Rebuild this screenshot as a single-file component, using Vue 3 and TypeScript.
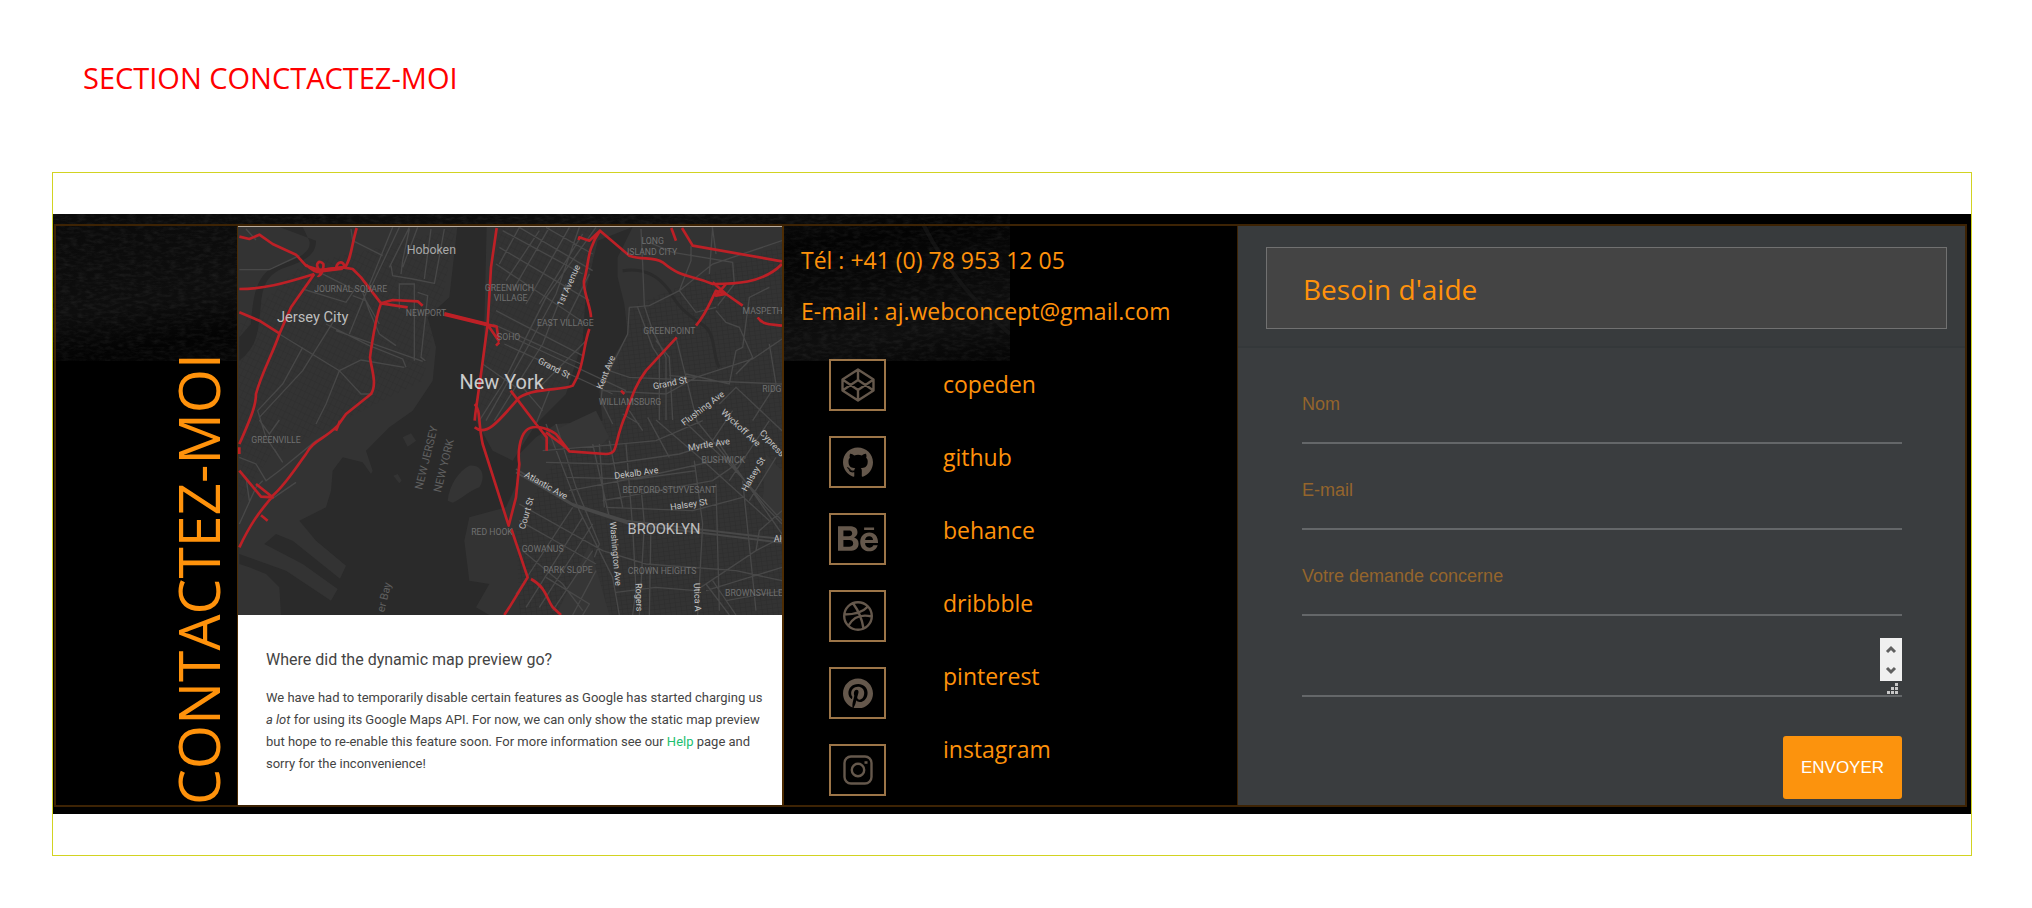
<script setup lang="ts">
import { ref } from 'vue'

interface Network {
  name: string
  viewBox: string
  width: number
  fill?: string
  stroke?: string
}

const networks: Network[] = [
  { name: 'copeden', viewBox: '0 0 34 34', width: 34, stroke: 'M17 1.5 32.5 11.5V22.5L17 32.5 1.5 22.5V11.5ZM17 32.5V22M32.5 11.5 17 22 1.5 11.5M1.5 22.5 17 12 32.5 22.5M17 1.5V12' },
  { name: 'github', viewBox: '0 0 496 512', width: 30, fill: 'M165.9 397.4c0 2-2.3 3.6-5.2 3.6-3.3.3-5.6-1.3-5.6-3.6 0-2 2.3-3.6 5.2-3.6 3-.3 5.6 1.3 5.6 3.6zm-31.1-4.5c-.7 2 1.3 4.3 4.3 4.9 2.6 1 5.6 0 6.2-2s-1.3-4.3-4.3-5.2c-2.6-.7-5.5.3-6.2 2.3zm44.2-1.7c-2.9.7-4.9 2.6-4.6 4.9.3 2 2.9 3.3 5.9 2.6 2.9-.7 4.9-2.6 4.6-4.6-.3-1.9-3-3.2-5.9-2.9zM244.8 8C106.1 8 0 113.3 0 252c0 110.9 69.8 205.8 169.5 239.2 12.8 2.3 17.3-5.6 17.3-12.1 0-6.2-.3-40.4-.3-61.4 0 0-70 15-84.7-29.8 0 0-11.4-29.1-27.8-36.6 0 0-22.9-15.7 1.6-15.4 0 0 24.9 2 38.6 25.8 21.9 38.6 58.6 27.5 72.9 20.9 2.3-16 8.8-27.1 16-33.7-55.9-6.2-112.3-14.3-112.3-110.5 0-27.5 7.6-41.3 23.6-58.9-2.6-6.5-11.1-33.3 2.6-67.9 20.9-6.5 69 27 69 27 20-5.6 41.5-8.5 62.8-8.5s42.8 2.9 62.8 8.5c0 0 48.1-33.6 69-27 13.7 34.7 5.2 61.4 2.6 67.9 16 17.7 25.8 31.5 25.8 58.9 0 96.5-58.9 104.2-114.8 110.5 9.2 7.9 17 22.9 17 46.4 0 33.7-.3 75.4-.3 83.6 0 6.5 4.6 14.4 17.3 12.1C428.2 457.8 496 362.9 496 252 496 113.3 383.5 8 244.8 8zM97.2 352.9c-1.3 1-1 3.3.7 5.2 1.6 1.6 3.9 2.3 5.2 1 1.3-1 1-3.3-.7-5.2-1.6-1.6-3.9-2.3-5.2-1zm-10.8-8.1c-.7 1.3.3 2.9 2.3 3.9 1.6 1 3.6.7 4.3-.7.7-1.3-.3-2.9-2.3-3.9-2-.6-3.6-.3-4.3.7zm32.4 35.6c-1.6 1.3-1 4.3 1.3 6.2 2.3 2.3 5.2 2.6 6.5 1 1.3-1.3.7-4.3-1.3-6.2-2.2-2.3-5.2-2.6-6.5-1zm-11.4-14.7c-1.6 1-1.6 3.6 0 5.9 1.6 2.3 4.3 3.3 5.6 2.3 1.6-1.3 1.6-3.9 0-6.2-1.4-2.3-4-3.3-5.6-2z' },
  { name: 'behance', viewBox: '0 0 576 512', width: 40, fill: 'M232 237.2c31.8-15.2 48.4-38.2 48.4-74 0-70.6-52.6-87.8-113.3-87.8H0v354.4h171.8c64.4 0 124.9-30.9 124.9-102.9 0-44.5-21.1-77.4-64.7-89.7zM77.9 135.9H151c28.1 0 53.4 7.9 53.4 40.5 0 30.1-19.7 42.2-47.5 42.2h-79v-82.7zm83.3 233.7H77.9V272h84.9c34.3 0 56 14.3 56 50.6 0 35.8-25.9 47-57.6 47zm358.5-240.7H376V94h143.7v34.9zM576 305.2c0-75.9-44.4-139.2-124.9-139.2-78.2 0-131.3 58.8-131.3 135.8 0 79.9 50.3 134.7 131.3 134.7 61.3 0 101-27.6 120.1-86.3H509c-6.7 21.9-34.3 33.5-55.7 33.5-41.3 0-63-24.2-63-65.3h185.1c.3-4.2.6-8.7.6-13.2zM390.4 274c2.3-33.7 24.7-54.8 58.5-54.8 35.4 0 53.2 20.8 56.2 54.8H390.4z' },
  { name: 'dribbble', viewBox: '0 0 30 30', width: 30, stroke: 'M15 1.2A13.8 13.8 0 1 0 15 28.8 13.8 13.8 0 1 0 15 1.2M10 2.2C15 9 19 17 20.5 27.5M1.2 13.5C11 13.5 20 11 25 5.5M5.5 24.5C10 16.5 18 13 28.8 15.5' },
  { name: 'pinterest', viewBox: '0 0 496 512', width: 30, fill: 'M496 256c0 137-111 248-248 248-25.6 0-50.2-3.9-73.4-11.1 10.1-16.5 25.2-43.5 30.8-65 3-11.6 15.4-59 15.4-59 8.1 15.4 31.7 28.5 56.8 28.5 74.8 0 128.7-68.8 128.7-154.3 0-81.9-66.9-143.2-152.9-143.2-107 0-163.9 71.8-163.9 150.1 0 36.4 19.4 81.7 50.3 96.1 4.7 2.2 7.2 1.2 8.3-3.3.8-3.4 5-20.3 6.9-28.1.6-2.5.3-4.7-1.7-7.1-10.1-12.5-18.3-35.3-18.3-56.6 0-54.7 41.4-107.6 112-107.6 60.9 0 103.6 41.5 103.6 100.9 0 67.1-33.9 113.6-78 113.6-24.3 0-42.6-20.1-36.7-44.8 7-29.5 20.5-61.3 20.5-82.6 0-19-10.2-34.9-31.4-34.9-24.9 0-44.9 25.7-44.9 60.2 0 22 7.4 36.8 7.4 36.8s-24.5 103.8-29 123.2c-5 21.4-3 51.6-.9 71.2C65.4 450.9 0 361.1 0 256 0 119 111 8 248 8s248 111 248 248z' },
  { name: 'instagram', viewBox: '0 0 30 30', width: 30, stroke: 'M8 1.5H22A6.5 6.5 0 0 1 28.5 8V22A6.5 6.5 0 0 1 22 28.5H8A6.5 6.5 0 0 1 1.5 22V8A6.5 6.5 0 0 1 8 1.5ZM15 8.8A6.2 6.2 0 1 0 15 21.2 6.2 6.2 0 1 0 15 8.8M21.5 7.5h3' },
]

interface MapLabel {
  text: string
  x: number
  y: number
  kind: 'city' | 'town' | 'suburb' | 'area' | 'street' | 'water'
  angle?: number
}

const mapLabels: MapLabel[] = [
  { text: 'New York', x: 797, y: 495, kind: 'city' },
  { text: 'Jersey City', x: 230, y: 294, kind: 'town' },
  { text: 'Hoboken', x: 586, y: 90, kind: 'suburb' },
  { text: 'BROOKLYN', x: 1284, y: 930, kind: 'town' },
  { text: 'JOURNAL SQUARE', x: 344, y: 205, kind: 'area' },
  { text: 'NEWPORT', x: 570, y: 275, kind: 'area' },
  { text: 'GREENWICH', x: 820, y: 200, kind: 'area' },
  { text: 'VILLAGE', x: 824, y: 230, kind: 'area' },
  { text: 'SOHO', x: 818, y: 347, kind: 'area' },
  { text: 'EAST VILLAGE', x: 988, y: 307, kind: 'area' },
  { text: 'LONG', x: 1250, y: 61, kind: 'area' },
  { text: 'ISLAND CITY', x: 1248, y: 92, kind: 'area' },
  { text: 'GREENPOINT', x: 1300, y: 330, kind: 'area' },
  { text: 'MASPETH', x: 1580, y: 270, kind: 'area' },
  { text: 'WILLIAMSBURG', x: 1182, y: 542, kind: 'area' },
  { text: 'RIDGE', x: 1615, y: 505, kind: 'area' },
  { text: 'GREENVILLE', x: 120, y: 658, kind: 'area' },
  { text: 'RED HOOK', x: 768, y: 934, kind: 'area' },
  { text: 'BUSHWICK', x: 1462, y: 716, kind: 'area' },
  { text: 'BEDFORD-STUYVESANT', x: 1300, y: 808, kind: 'area' },
  { text: 'GOWANUS', x: 920, y: 983, kind: 'area' },
  { text: 'PARK SLOPE', x: 996, y: 1048, kind: 'area' },
  { text: 'CROWN HEIGHTS', x: 1278, y: 1049, kind: 'area' },
  { text: 'BROWNSVILLE', x: 1554, y: 1116, kind: 'area' },
  { text: '1st Avenue', x: 1006, y: 188, kind: 'street', angle: -66 },
  { text: 'Grand St', x: 950, y: 440, kind: 'street', angle: 27 },
  { text: 'Grand St', x: 1304, y: 486, kind: 'street', angle: -12 },
  { text: 'Kent Ave', x: 1118, y: 448, kind: 'street', angle: -68 },
  { text: 'Flushing Ave', x: 1406, y: 560, kind: 'street', angle: -37 },
  { text: 'Wyckoff Ave', x: 1508, y: 618, kind: 'street', angle: 43 },
  { text: 'Myrtle Ave', x: 1420, y: 670, kind: 'street', angle: -9 },
  { text: 'Cypress', x: 1602, y: 664, kind: 'street', angle: 48 },
  { text: 'Halsey St', x: 1560, y: 755, kind: 'street', angle: -60 },
  { text: 'Halsey St', x: 1360, y: 850, kind: 'street', angle: -9 },
  { text: 'Dekalb Ave', x: 1202, y: 756, kind: 'street', angle: -8 },
  { text: 'Atlantic Ave', x: 926, y: 792, kind: 'street', angle: 29 },
  { text: 'Court St', x: 880, y: 870, kind: 'street', angle: -74 },
  { text: 'Washington Ave', x: 1130, y: 990, kind: 'street', angle: 85 },
  { text: 'Rogers', x: 1200, y: 1120, kind: 'street', angle: 88 },
  { text: 'Utica A', x: 1375, y: 1120, kind: 'street', angle: 88 },
  { text: 'Al', x: 1625, y: 955, kind: 'street' },
  { text: 'NEW JERSEY', x: 582, y: 704, kind: 'water', angle: -76 },
  { text: 'NEW YORK', x: 634, y: 728, kind: 'water', angle: -76 },
  { text: 'er Bay', x: 455, y: 1122, kind: 'water', angle: -76 },
]

const form = ref({ nom: '', email: '', sujet: '', message: '' })
</script>

<template>
  <main class="page">
    <h1 class="page-title">SECTION CONCTACTEZ-MOI</h1>
    <section class="frame">
      <div class="panel">
        <svg class="fabric" width="957" height="147" aria-hidden="true">
          <defs>
            <filter id="grain" x="0" y="0" width="100%" height="100%">
              <feTurbulence type="fractalNoise" baseFrequency="0.12 0.3" numOctaves="3" seed="4" />
              <feColorMatrix values="0 0 0 0 1  0 0 0 0 1  0 0 0 0 1  0.12 0 0 0 -0.05" />
            </filter>
            <linearGradient id="fold" x1="0" y1="0" x2="1" y2="1">
              <stop offset="0" stop-color="#0a0a0a" />
              <stop offset="0.35" stop-color="#0e0e0e" />
              <stop offset="0.5" stop-color="#030303" />
              <stop offset="0.85" stop-color="#0f0f0f" />
              <stop offset="1" stop-color="#040404" />
            </linearGradient>
          </defs>
          <rect width="957" height="147" fill="url(#fold)" />
          <rect width="957" height="147" filter="url(#grain)" />
          <path d="M870 10Q900 70 957 120" fill="none" stroke="#1b1b1b" stroke-width="4" opacity="0.6" />
        </svg>
        <div class="columns">
          <div class="side">
            <h2 class="side-title">CONTACTEZ-MOI</h2>
          </div>

          <div class="location">
            <svg class="map" viewBox="6 9 1632 1164" role="img" aria-label="New York">
              <defs>
                <pattern id="blocks" width="14" height="20" patternUnits="userSpaceOnUse" patternTransform="rotate(26)">
                  <path d="M0 0H14M0 0V20" stroke="#2d2d2d" stroke-width="3" />
                </pattern>
                <pattern id="blocks-east" width="16" height="13" patternUnits="userSpaceOnUse" patternTransform="rotate(-7)">
                  <path d="M0 0H16M0 0V13" stroke="#2c2c2c" stroke-width="3" />
                </pattern>
              </defs>
              <rect x="6" y="9" width="1632" height="1164" fill="#333" />
              <path d="M200 120 480 60 660 9 620 220 560 470 380 560 100 700 10 840V300Z" fill="url(#blocks)" />
              <path d="M790 9H1080L1060 420 980 480 730 560Z" fill="url(#blocks)" />
              <path d="M1180 250 1638 60V1173H850L840 900 950 720 1110 580Z" fill="url(#blocks-east)" />
              <g class="water">
                <path d="M664 9H752L742 420 720 590 770 680 830 710 900 600 990 510 1040 350 1050 200 1085 50 1190 9 1145 100V160L1165 240 1175 330 1120 420 1090 500 1100 590 960 600 900 640 850 690 842 780 810 850 700 880 685 950 700 1070 760 1080 720 1150 760 1173H135L130 1090 90 1050 40 1030 10 1020V990L150 1040 285 1130 305 1095 200 1020 85 960 120 930 170 950 312 1064 330 1025 240 950 190 890 270 850 285 800 290 740 320 700 380 715 405 750 410 740 390 680 460 610 530 560 590 470 600 370 575 280 640 220Z" />
                <path d="M90 9H130L240 50C240 90 210 110 150 130 90 150 80 190 75 240 65 320 70 360 10 410V340L45 300C50 220 60 160 110 130 170 110 230 90 220 50L200 9Z" />
                <path class="creek" d="M1160 140C1230 130 1270 160 1300 200 1330 260 1370 280 1410 310 1440 340 1430 400 1450 430" />
              </g>
              <path d="M635 830C640 780 670 740 700 725 740 720 750 760 730 790 700 800 670 830 650 836Z" fill="#343434" />
              <path d="M500 640 525 628 540 650 515 668ZM472 755 485 750 497 770 490 778Z" fill="#333" />
              <path class="parks" d="M1590 690 1638 740V900L1580 830ZM910 640 1080 560 1120 640 1090 670H950ZM1060 960 1120 1173H960L1000 1090Z" />
              <g class="roads">
                <path d="M10 137H100L190 95M30 15 60 48M345 15 350 50 440 95M240 140 310 175 352 195M200 195 330 235 360 190M340 330 470 10M350 215 390 230 430 300M400 200 490 10M460 130 520 10M500 130 545 10M595 180 625 15M565 165 585 15M495 150 500 110 520 15M465 125 470 155 530 165 595 178M490 255V180H535V410M545 205 575 215 555 400 568 410M380 205 400 260 430 330 480 365M130 330 310 440 375 510 410 510M270 300 400 365 500 405 510 430M300 320 560 412M310 440 375 408 505 430M310 440 270 540 240 600M300 280 200 440 70 580M200 370 140 480 65 560 90 640 140 715M10 700 60 720 90 770 130 740 240 650 300 615M115 675 140 715M130 588 100 630 70 588M10 900 60 790 80 770M30 760 40 830M100 830 180 775" />
                <path d="M730 590 800 480 930 220 1080 10M750 590 880 360 960 210 1030 10M775 590 920 360 990 180M780 120 1050 300M800 20 1040 150M790 70 1060 230M740 420 840 490M770 300 1035 420M780 260 1040 395M850 10 1070 140M930 10 1070 90M790 120 850 10M810 170 910 20M830 200 940 10M870 240 1000 10M910 240 1040 30M990 290 1060 150M805 360 1130 510M840 345 1170 500M900 600 940 500M900 500 1050 350M860 490 920 560" />
                <path d="M1215 15 1220 120 1225 245 1250 320 1290 400V588M1180 250 1240 245 1330 200 1430 120 1638 50M1180 250 1175 330 1100 480 1095 530 1130 600M1205 250 1250 370 1270 400 1270 588M1260 350 1300 400 1310 588M1430 15 1428 10M1365 65V110L1330 200 1380 265 1440 250M1440 90 1430 15M1240 55 1310 85 1490 115 1495 180 1445 245M1420 150 1430 10M1600 190 1540 220 1520 370 1500 380 1480 480 1350 450M1638 345 1550 405 1380 460 1300 455M1440 260 1470 295 1510 310 1550 400 1500 450M1120 440 1180 460 1638 480M1100 500 1290 510 1380 460M1320 340 1385 600M1600 360 1620 480 1550 590M1450 540 1500 490 1638 620M1160 570 1210 600M1180 560 1220 620M1235 580 1300 700" />
                <path d="M840 735 1010 840 1170 890 1638 945M840 745 1015 846 1180 900 1638 956" stroke-width="6" />
                <path d="M930 600 1030 860 1130 1060 1150 1173M960 600 1020 790 1090 960 1075 1000M1070 660 1120 880M1090 660 1105 850M1120 650 1160 850M1170 660 1190 910 1200 1100 1190 1173M1215 790 1225 900 1210 1173M1245 900 1240 1173M1375 710 1400 900 1385 1173M1440 780 1450 1160M1520 770 1560 1160M920 680 1100 665 1260 650 1400 590M930 715 1120 720 1330 690 1460 650M990 760 1200 765 1380 740M1000 800 1260 750 1440 710M1100 830 1430 770 1530 700M1110 850 1370 860 1520 820M850 840 1100 980 1230 1020 1500 1040 1638 1070M1140 1105 1260 1090 1380 1100 1560 980 1638 940M860 980 980 1080 1040 1160M840 1110 1010 850M870 1150 1040 880M910 1150 1070 900M950 1160 1070 980M1010 1173 1080 1040M930 1060 1060 1140 1040 1173M850 890 1080 1020M1380 588 1590 850 1638 900M1450 660 1638 930M1260 588 1390 700 1600 890M1340 588 1470 710 1638 890M1480 770 1600 590M1430 650 1490 560M1540 830 1620 700M1560 980 1570 920 1638 860M1430 1070 1500 1173M1410 1080 1480 1173M1410 1100 1638 1030M1638 1100 1470 1130" />
              </g>
              <g class="highways">
                <path d="M10 38 40 45 70 32 110 60 180 92 210 125 250 138 320 130 350 135 375 160 435 238 470 228 545 232 560 245M435 238 515 250M10 195C80 195 140 180 235 150M210 122C230 140 250 150 260 140M250 138C235 120 250 105 262 120 265 140 250 160 245 155M300 132C305 110 325 110 325 130M325 132C345 110 345 70 362 12M235 150 165 250 130 330C110 390 75 450 60 510 60 540 50 570 10 660M10 265 70 290 130 328M435 238C420 280 410 340 402 400 405 430 425 480 405 510L330 570 305 605C260 650 230 650 210 690 180 730 150 780 110 815 85 850 55 875 10 970M10 740 75 818 110 820 60 780M75 874 95 890M10 670V690M312 590 300 620" />
                <path d="M782 12 765 130 755 300 735 450 718 570 716 590M625 270 755 302 782 308 788 350 755 302M780 365 790 355M716 540C735 560 725 590 740 660L818 905 840 820 850 720C845 690 850 640 870 620 890 600 930 610 960 630L1000 682 1110 690C1150 690 1130 660 1170 570 1190 510 1200 480 1230 440L1322 340M716 610C750 640 790 590 850 520 900 490 980 500 1010 485 1045 430 1040 370 1060 315M1065 280C1065 250 1040 200 1044 170 1060 120 1050 80 1092 20L1180 95C1220 110 1250 95 1280 115 1340 165 1360 150 1430 180 1490 180 1580 180 1638 120M1092 20 1060 50 1030 40 1028 48M1306 12 1320 50M1338 12 1370 65 1638 112M1380 305C1410 270 1420 240 1440 200L1470 210 1520 245M1430 175 1470 210 1440 215 1470 180M1565 280C1580 305 1610 300 1638 305M1155 500 1165 510M824 500 900 600 932 640 932 680M930 625 990 670M826 915 875 1060 820 1150 805 1173M885 1065C930 1090 930 1120 950 1150L975 1173" />
                <path d="M755 302 625 270M240 142 320 132" stroke-width="12" />
              </g>
              <text
                v-for="label in mapLabels"
                :key="label.text + label.x"
                :class="['map-label', label.kind]"
                :x="label.x"
                :y="label.y"
                :transform="`rotate(${label.angle ?? 0} ${label.x} ${label.y})`"
              >{{ label.text }}</text>
            </svg>
            <div class="notice">
              <h3 class="notice-title">Where did the dynamic map preview go?</h3>
              <p class="notice-text">
                We have had to temporarily disable certain features as Google has started charging us<br />
                <em>a lot</em> for using its Google Maps API. For now, we can only show the static map preview<br />
                but hope to re-enable this feature soon. For more information see our <a href="#help">Help</a> page and<br />
                sorry for the inconvenience!
              </p>
            </div>
          </div>

          <div class="contact">
            <p class="contact-line">Tél : +41 (0) 78 953 12 05</p>
            <p class="contact-line">E-mail : aj.webconcept@gmail.com</p>
            <div class="networks">
              <div class="network-icons">
                <a v-for="n in networks" :key="n.name" class="network-icon" :href="`#${n.name}`" :aria-label="n.name">
                  <svg :viewBox="n.viewBox" :width="n.width" aria-hidden="true">
                    <path v-if="n.fill" :d="n.fill" fill="currentColor" />
                    <path v-if="n.stroke" :d="n.stroke" fill="none" stroke="currentColor" stroke-width="2.4" stroke-linejoin="round" />
                  </svg>
                </a>
              </div>
              <div class="network-names">
                <a v-for="n in networks" :key="n.name" :href="`#${n.name}`">{{ n.name }}</a>
              </div>
            </div>
          </div>

          <form class="help" @submit.prevent>
            <header class="help-header">
              <h2 class="help-title">Besoin d'aide</h2>
            </header>
            <div class="fields">
              <div class="field">
                <label for="nom">Nom</label>
                <input id="nom" v-model="form.nom" type="text" />
              </div>
              <div class="field">
                <label for="email">E-mail</label>
                <input id="email" v-model="form.email" type="email" />
              </div>
              <div class="field">
                <label for="sujet">Votre demande concerne</label>
                <input id="sujet" v-model="form.sujet" type="text" />
              </div>
              <div class="message">
                <textarea v-model="form.message" aria-label="Message"></textarea>
                <svg class="scroller" width="22" height="56" viewBox="0 0 22 56" aria-hidden="true">
                  <rect width="22" height="43" fill="#f0f0f0" />
                  <path d="M7 14 11 10 15 14M7 30 11 34 15 30" fill="none" stroke="#606060" stroke-width="3" />
                  <path d="M15 45h3v3h-3zM11 49h3v3h-3zM15 49h3v3h-3zM7 53h3v3H7zM11 53h3v3h-3zM15 53h3v3h-3z" fill="#c8c8c8" />
                </svg>
              </div>
              <button class="send" type="submit">ENVOYER</button>
            </div>
          </form>
        </div>
      </div>
    </section>
  </main>
</template>

<style>
body {
  margin: 0;
  background: #fff;
}
</style>

<style scoped>
.page {
  padding: 56px 60px 51px 52px;
  font-family: "Open Sans", "Noto Sans", sans-serif;
}

.page * {
  box-sizing: border-box;
}

h1,
h2,
h3,
p {
  margin: 0;
  font-weight: 400;
}

.page-title {
  margin: 0 0 72px 31px;
  color: #f00;
  font-size: 29px;
  line-height: 44px;
}

.frame {
  padding: 41px 0;
  border: 1px solid #d2d322;
}

.panel {
  position: relative;
  padding: 10px 4px 7px 1px;
  background: #000;
}

.fabric {
  position: absolute;
  top: 0;
  left: 0;
}

.columns {
  position: relative;
  display: grid;
  grid-template-columns: minmax(0, 181fr) minmax(0, 547fr) minmax(0, 453fr) minmax(0, 728fr);
  border: 2px solid #3d2304;
}

.side {
  display: flex;
  align-items: flex-end;
  justify-content: flex-end;
}

.side-title {
  color: #ff920b;
  font-size: 57px;
  line-height: 78px;
  writing-mode: vertical-rl;
  transform: rotate(180deg);
}

.location {
  border: solid #4d2c03;
  border-width: 0 2px 0 1px;
  background: #fff;
}

.map {
  display: block;
  width: 100%;
  border-top: 1px solid #b9ada0;
}

.water {
  fill: #2a2a2a;
}

.creek {
  fill: none;
  stroke: #2b2b2b;
  stroke-width: 9;
}

.parks {
  fill: #363636;
}

.roads {
  fill: none;
  stroke: #484848;
  stroke-width: 4;
}

.highways {
  fill: none;
  stroke: #bd2026;
  stroke-width: 8;
  stroke-linejoin: round;
}

.map-label {
  font-family: Roboto, sans-serif;
  text-anchor: middle;
}

.city {
  fill: #cbcbcb;
  font-size: 60px;
}

.town {
  fill: #bdbdbd;
  font-size: 44px;
}

.suburb {
  fill: #a8a8a8;
  font-size: 37px;
}

.area {
  fill: #707070;
  font-size: 26px;
}

.street {
  fill: #c4c4c4;
  font-size: 27px;
}

.water.map-label {
  fill: #606060;
  font-size: 33px;
}

.notice {
  padding: 32px 0 28px 28px;
  color: #444;
  font-family: Roboto, sans-serif;
}

.notice-title {
  margin-bottom: 14px;
  font-size: 16px;
  line-height: 26px;
}

.notice-text {
  font-size: 13px;
  line-height: 22px;
}

.notice-text a {
  color: #1dc071;
  text-decoration: none;
}

.contact {
  padding: 18px 16px 8px 17px;
  color: #ff920b;
  font-size: 23px;
}

.contact-line {
  margin-bottom: 18px;
  line-height: 33px;
}

.networks {
  display: flex;
  gap: 57px;
  padding: 13px 0 0 28px;
}

.network-icons {
  display: flex;
  flex-direction: column;
  gap: 25px;
}

.network-icon {
  display: flex;
  align-items: center;
  justify-content: center;
  width: 57px;
  height: 52px;
  border: 2px solid #9c7548;
  color: #65584c;
}

.network-names {
  display: flex;
  flex-direction: column;
  gap: 40px;
  padding-top: 9px;
}

.network-names a {
  color: #ff920b;
  line-height: 33px;
  text-decoration: none;
}

.help {
  border-left: 1px solid #3d2304;
  background: #3a3d3f;
}

.help-header {
  padding: 21px 18px 17px 28px;
  border-bottom: 2px solid #34383a;
  background: #383b3d;
}

.help-title {
  padding: 19px 36px 17px;
  border: 1px solid #717171;
  background: #444;
  color: #ff920b;
  font-size: 28px;
  line-height: 44px;
}

.fields {
  display: flex;
  flex-direction: column;
  gap: 22px;
  padding: 44px 63px 6px 64px;
  font-family: "Liberation Sans", Arial, sans-serif;
}

.field {
  display: flex;
  flex-direction: column;
}

.field + .field {
  margin-top: 12px;
}

.field label {
  color: #94652c;
  font-size: 18px;
  line-height: 24px;
}

.field input {
  height: 28px;
}

.field input,
.message {
  width: 100%;
  border: 0;
  border-bottom: 2px solid #646769;
}

.field input,
.message textarea {
  padding: 0;
  background: transparent;
  color: #ff920b;
  font: inherit;
  outline: 0;
}

.message {
  display: flex;
  align-items: flex-start;
  height: 59px;
}

.message textarea {
  flex: 1;
  height: 57px;
  border: 0;
  resize: none;
}

.send {
  align-self: flex-end;
  width: 119px;
  height: 63px;
  margin-top: 17px;
  border: 0;
  border-radius: 3px;
  background: #fc930d;
  color: #fff;
  font-family: inherit;
  font-size: 17px;
}
</style>
